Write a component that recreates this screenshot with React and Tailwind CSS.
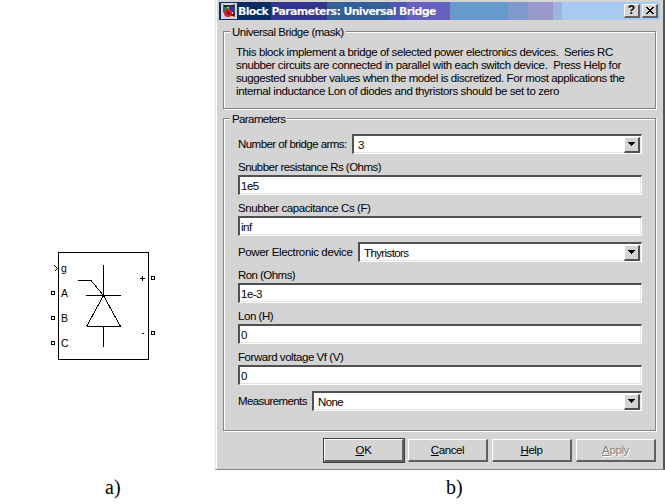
const GroupBox = ({ title, titleClass, className, children }) => (
  <section className={`w-[433px] border border-[#858585] shadow-[1px_1px_0_#fff,inset_1px_1px_0_#fff] ${className}`}>
    <h2 className="-mt-[8px] ml-[6px] flex h-[15px] w-fit items-center bg-[#d4d4d4] px-[2px] pt-px">
      <span className={titleClass}>{title}</span>
    </h2>
    {children}
  </section>
);

const sunken =
  "flex h-[20px] items-center border-t-2 border-l-2 border-r border-b border-t-[#505050] border-l-[#505050] border-r-white border-b-white bg-white shadow-[inset_-1px_-1px_0_#e4e4e0]";

const Field = ({ label, labelClass, value }) => (
  <div className="h-[41px]">
    <div className="flex h-[21px] items-center pt-[5px]">
      <label className={labelClass}>{label}</label>
    </div>
    <div className={`${sunken} w-[404px] pl-[1px]`}>
      <span className="pt-[2px] tracking-[-0.5px]">{value}</span>
    </div>
  </div>
);

const Select = ({ label, labelClass, value, className }) => (
  <div className="flex h-[20px] w-[404px] items-center">
    <label className={`shrink-0 ${labelClass}`}>{label}</label>
    <div className={`${sunken} ml-auto justify-between pl-[4px] ${className}`}>
      <span className="pt-[2px] tracking-[-0.6px]">{value}</span>
      <button className="mr-px flex h-[16px] w-[16px] items-center justify-center border-t border-l border-r-2 border-b-2 border-t-white border-l-white border-r-[#505050] border-b-[#505050] bg-[#d4d4d4]">
        <svg width="7" height="4" viewBox="0 0 7 4" shapeRendering="crispEdges">
          <path d="M0 0h7v1H6v1H5v1H4v1H3V3H2V2H1V1H0z" />
        </svg>
      </button>
    </div>
  </div>
);

const raised =
  "flex h-[23px] w-[80px] items-center justify-center border-t border-l border-r-2 border-b-2 border-t-white border-l-white border-r-[#606060] border-b-[#606060] tracking-[-0.4px]";

const BlockDiagram = () => (
  <svg className="block" width="120" height="120" viewBox="45 245 120 120" fill="none" stroke="#000" shapeRendering="crispEdges">
    <rect x="58.5" y="252.5" width="90" height="107" />
    <path d="M103.5 265v30M103.5 326v21M86 295.5h35M86.5 326.5h34M78 280.5h13l12.5 15M103.5 295.5l-17 31M103.5 295.5l17 31" />
    <path d="M54.5 265.5l3 3-3 3" />
    <rect x="51.5" y="291.5" width="3" height="3" />
    <rect x="51.5" y="316.5" width="3" height="3" />
    <rect x="51.5" y="341.5" width="3" height="3" />
    <rect x="151.5" y="276.5" width="3" height="3" />
    <rect x="151.5" y="331.5" width="3" height="3" />
    <path d="M140 278.5h5M142.5 276v5M142 333.5h2" />
    <g fill="#000" stroke="none" fontSize="10.5" fontFamily="Liberation Sans, sans-serif">
      <text x="61" y="272">g</text>
      <text x="61" y="297">A</text>
      <text x="61" y="322">B</text>
      <text x="61" y="347">C</text>
    </g>
  </svg>
);

const TitleIcon = () => (
  <svg className="block shrink-0" width="16" height="16" viewBox="0 0 16 16">
    <path d="M0 0h16v16H0z" fill="#d4d4d4" />
    <path d="M2 1v9l6-4z" fill="#168c40" />
    <path d="M8 4h4v5H8z" fill="#2030c8" />
    <path d="M3 3h10v9H8" fill="none" stroke="#000" strokeWidth="1.3" />
    <circle cx="7" cy="10" r="4" fill="#e8182c" />
    <path d="M7 8v2.5h2.500M13 10v4M13 1v2" stroke="#300" fill="none" />
  </svg>
);

export default function App() {
  return (
    <main className="flex h-[504px] w-[665px] overflow-hidden bg-white font-['Liberation_Sans',Arial,sans-serif] text-[11.5px] leading-[13px] whitespace-pre text-black">
      <div className="flex w-[215px] shrink-0 flex-col pt-[245px]">
        <div className="pl-[45px]"><BlockDiagram /></div>
        <p className="mt-[110px] pl-[105px] font-['Liberation_Serif',serif] text-[20px] leading-[24px]">a)</p>
      </div>
      <div className="w-[450px] shrink-0">
        <div className="h-[470px] w-[450px] border-r-2 border-b border-l border-r-[#555] border-b-[#858585] border-l-[#e4e4e4] bg-[#d4d4d4] pt-[2px] shadow-[inset_1px_0_0_#fff]">
          <header className="ml-[3px] flex h-[18px] w-[441px] items-center bg-[linear-gradient(90deg,#082c66_0_52px,#333390_52px_108px,#336098_108px_171px,#4c58b4_171px_188px,#6660c0_188px_231px,#6699cc_231px_289px,#809acc_289px_309px,#9999cc_309px_334px,#a0b4e0_334px_343px,#a6caf0_343px)] pl-[2px]">
            <TitleIcon />
            <h1 className="ml-px font-['DejaVu_Sans',sans-serif] text-[11px] font-bold tracking-[-0.66px] text-white">Block Parameters: Universal Bridge</h1>
            <button className="ml-auto flex h-[14px] w-[16px] items-center justify-center border-t border-l border-r-2 border-b-2 border-t-white border-l-white border-r-[#606060] border-b-[#606060] bg-[#d4d4d4] text-[12px] font-bold">?</button>
            <button className="mr-[2px] ml-[2px] flex h-[14px] w-[16px] items-center justify-center border-t border-l border-r-2 border-b-2 border-t-white border-l-white border-r-[#606060] border-b-[#606060] bg-[#d4d4d4]">
              <svg width="8" height="7" viewBox="0 0 8 7" shapeRendering="crispEdges"><path d="M0 0h2v1h1v1h2V1h1V0h2v1H7v1H6v1H5v1h1v1h1v1h1v1H6V6H5V5H3v1H2v1H0V6h1V5h1V4h1V3H2V2H1V1H0z" /></svg>
            </button>
          </header>
          <GroupBox title="Universal Bridge (mask)" titleClass="tracking-[-0.48px]" className="mt-[11px] ml-[7px] h-[78px]">
            <div className="mt-[7px] ml-[12px] leading-[13px]">
              <p className="tracking-[-0.4px]">This block implement a bridge of selected power electronics devices.  Series RC</p>
              <p className="tracking-[-0.36px]">snubber circuits are connected in parallel with each switch device.  Press Help for</p>
              <p className="tracking-[-0.43px]">suggested snubber values when the model is discretized. For most applications the</p>
              <p className="tracking-[-0.4px]">internal inductance Lon of diodes and thyristors should be set to zero</p>
            </div>
          </GroupBox>
          <GroupBox title="Parameters" titleClass="tracking-[-0.6px]" className="mt-[9px] ml-[7px] h-[313px]">
            <div className="mt-[8px] ml-[14px]">
              <Select label="Number of bridge arms:" labelClass="tracking-[-0.55px]" value="3" className="w-[290px]" />
              <Field label="Snubber resistance Rs (Ohms)" labelClass="tracking-[-0.53px]" value="1e5" />
              <Field label="Snubber capacitance Cs (F)" labelClass="tracking-[-0.41px]" value="inf" />
              <div className="mt-[6px]"><Select label="Power Electronic device" labelClass="tracking-[-0.36px]" value="Thyristors" className="w-[284px]" /></div>
              <Field label="Ron (Ohms)" labelClass="tracking-[-0.55px]" value="1e-3" />
              <Field label="Lon (H)" labelClass="tracking-[-0.45px]" value="0" />
              <Field label="Forward voltage Vf (V)" labelClass="tracking-[-0.44px]" value="0" />
              <div className="mt-[6px]"><Select label="Measurements" labelClass="tracking-[-0.6px]" value="None" className="w-[330px]" /></div>
            </div>
          </GroupBox>
          <footer className="mt-[7px] ml-[107px] flex h-[25px] items-center">
            <button className="h-[25px] w-[82px] border border-[#404040]">
              <span className={raised}><span><u>O</u>K</span></span>
            </button>
            <button className={`${raised} ml-[3px]`}><span><u>C</u>ancel</span></button>
            <button className={`${raised} ml-[4px]`}><span><u>H</u>elp</span></button>
            <button className={`${raised} ml-[4px] text-[#858585] [text-shadow:1px_1px_0_#fff]`}><span><u>A</u>pply</span></button>
          </footer>
        </div>
        <p className="mt-[5px] pl-[231px] font-['Liberation_Serif',serif] text-[20px] leading-[24px]">b)</p>
      </div>
    </main>
  );
}
